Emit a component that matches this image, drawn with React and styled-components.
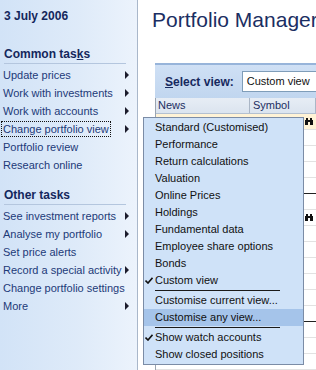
import React from "react";
import styled, { createGlobalStyle } from "styled-components";

const GlobalStyle = createGlobalStyle`
  html, body {
    margin: 0;
    padding: 0;
    background: #fff;
    overflow: hidden;
  }
  body {
    font-family: "Liberation Sans", Arial, sans-serif;
    font-size: 11px;
  }
`;

const Page = styled.div`
  position: relative;
  display: flex;
  width: 316px;
  height: 370px;
  overflow: hidden;
`;

/* ---------- sidebar ---------- */

const Sidebar = styled.div`
  width: 138px;
  flex-shrink: 0;
  box-sizing: border-box;
  padding-top: 7px;
  border-right: 1px solid #a9b7ca;
  background: linear-gradient(to right, #d2e3f7 0%, #dfebf9 60%, #ecf3fc 100%);
`;

const DateLine = styled.div`
  height: 18px;
  line-height: 18px;
  padding-left: 4px;
  font-size: 12px;
  font-weight: 700;
  color: #14275c;
`;

const Section = styled.div`
  margin-top: ${(p) => p.$gap}px;
`;

const Heading = styled.div`
  height: 17px;
  line-height: 17px;
  margin: 0 11px 2px 4px;
  border-bottom: 1px solid #b4c6de;
  font-size: 12px;
  font-weight: 700;
  color: #14275c;

  u {
    text-decoration: underline;
  }
`;

const TaskRow = styled.div`
  display: flex;
  align-items: center;
  justify-content: space-between;
  height: 18px;
  padding: 0 8px 0 3px;
  color: #1d3a78;
  white-space: nowrap;
`;

const FocusLabel = styled.span`
  display: inline-block;
  line-height: 14px;
  margin-left: -2px;
  padding: 0 1px;
  border: 1px dotted #111;
`;

const Arrow = styled.span`
  width: 0;
  height: 0;
  border-left: 4px solid #1c1c2c;
  border-top: 4px solid transparent;
  border-bottom: 4px solid transparent;
`;

/* ---------- main ---------- */

const Main = styled.div`
  flex: 1;
  display: flex;
  flex-direction: column;
  min-width: 0;
`;

const Title = styled.div`
  height: 26px;
  line-height: 26px;
  padding: 7px 0 0 14px;
  font-size: 21px;
  color: #1b2e62;
  white-space: nowrap;
`;

const Band = styled.div`
  display: flex;
  align-items: center;
  height: 38px;
  margin: 30px 0 0 17px;
  padding-left: 10px;
  border-top: 2px solid #97b4da;
  background: linear-gradient(to bottom, #cfe0f5, #c1d6ef);
  white-space: nowrap;
`;

const BandLabel = styled.span`
  font-size: 12px;
  font-weight: 700;
  color: #17295e;

  u {
    text-decoration: underline;
  }
`;

const SelectBox = styled.div`
  flex-shrink: 0;
  width: 120px;
  height: 19px;
  line-height: 19px;
  margin-left: 8px;
  padding-left: 4px;
  background: #fff;
  border: 1px solid #7f9db9;
  color: #111;
`;

const Table = styled.div`
  flex: 1;
  margin-left: 17px;
  border-left: 1px solid #9aa4b0;
`;

const HeaderRow = styled.div`
  display: flex;
  height: 15px;
  line-height: 15px;
  background: linear-gradient(to bottom, #e7edf5, #dbe4ef);
  border-bottom: 1px solid #b3c0d0;
  color: #1b2e62;
  white-space: nowrap;
`;

const HeadCell = styled.div`
  flex-shrink: 0;
  width: ${(p) => p.$w}px;
  padding-left: ${(p) => p.$pad}px;
  box-sizing: border-box;
  border-right: 1px solid #aab6c6;
`;

const BodyRow = styled.div`
  display: flex;
  justify-content: flex-end;
  align-items: center;
  height: 15px;
  padding-right: 2px;
  border-bottom: 1px solid ${(p) => (p.$strong ? "#222" : "#e2e2e2")};
  background: ${(p) => (p.$hot ? "#fff3d6" : "#fff")};
`;

/* ---------- dropdown menu ---------- */

const Menu = styled.div`
  position: absolute;
  left: 143px;
  top: 117px;
  width: 159px;
  padding: 1px 0;
  background: #cfe2f8;
  border: 1px solid #7b8ca6;
  color: #111;
`;

const MenuItem = styled.div`
  position: relative;
  height: 17px;
  line-height: 17px;
  padding-left: 11px;
  white-space: nowrap;
  background: ${(p) => (p.$active ? "#a5c4ea" : "transparent")};
`;

const Check = styled.svg`
  position: absolute;
  left: 1px;
  top: 5px;
`;

const MenuSep = styled.div`
  height: 3px;
  display: flex;
  align-items: center;
  padding-left: 11px;

  &::after {
    content: "";
    width: 125px;
    height: 1px;
    background: #1a1a1a;
  }
`;

const Binoculars = () => (
  <svg width="9" height="7" viewBox="0 0 9 7">
    <rect x="0" y="2" width="3" height="5" fill="#111" />
    <rect x="5" y="2" width="3" height="5" fill="#111" />
    <rect x="1" y="0" width="2" height="2" fill="#111" />
    <rect x="5" y="0" width="2" height="2" fill="#111" />
    <rect x="3" y="2" width="2" height="2" fill="#111" />
  </svg>
);

const CheckMark = () => (
  <Check width="8" height="7" viewBox="0 0 8 7">
    <path d="M0.5 3.5 L3 6 L7.5 0.8" stroke="#111" strokeWidth="1.6" fill="none" />
  </Check>
);

const commonTasks = [
  { label: "Update prices", more: true },
  { label: "Work with investments", more: true },
  { label: "Work with accounts", more: true },
  { label: "Change portfolio view", more: true, focus: true },
  { label: "Portfolio review" },
  { label: "Research online" },
];

const otherTasks = [
  { label: "See investment reports", more: true },
  { label: "Analyse my portfolio", more: true },
  { label: "Set price alerts" },
  { label: "Record a special activity", more: true },
  { label: "Change portfolio settings" },
  { label: "More", more: true },
];

const views = [
  "Standard (Customised)",
  "Performance",
  "Return calculations",
  "Valuation",
  "Online Prices",
  "Holdings",
  "Fundamental data",
  "Employee share options",
  "Bonds",
];

const TaskList = ({ items }) =>
  items.map((t) => (
    <TaskRow key={t.label}>
      {t.focus ? <FocusLabel>{t.label}</FocusLabel> : <span>{t.label}</span>}
      {t.more && <Arrow />}
    </TaskRow>
  ));

export default function App() {
  const rows = Array.from({ length: 16 }, (_, i) => i);

  return (
    <Page>
      <GlobalStyle />
      <Sidebar>
        <DateLine>3 July 2006</DateLine>
        <Section $gap={21}>
          <Heading>
            Common tas<u>k</u>s
          </Heading>
          <TaskList items={commonTasks} />
        </Section>
        <Section $gap={13}>
          <Heading>Other tasks</Heading>
          <TaskList items={otherTasks} />
        </Section>
      </Sidebar>

      <Main>
        <Title>Portfolio Manager</Title>
        <Band>
          <BandLabel>
            <u>S</u>elect view:
          </BandLabel>
          <SelectBox>Custom view</SelectBox>
        </Band>
        <Table>
          <HeaderRow>
            <HeadCell $w={94} $pad={2}>News</HeadCell>
            <HeadCell $w={66} $pad={3}>Symbol</HeadCell>
          </HeaderRow>
          {rows.map((i) => (
            <BodyRow key={i} $hot={i === 0} $strong={i === 4 || i === 12}>
              {(i === 0 || i === 6) && <Binoculars />}
            </BodyRow>
          ))}
        </Table>
      </Main>

      <Menu>
        {views.map((v) => (
          <MenuItem key={v}>{v}</MenuItem>
        ))}
        <MenuItem>
          <CheckMark />
          Custom view
        </MenuItem>
        <MenuSep />
        <MenuItem>Customise current view...</MenuItem>
        <MenuItem $active>Customise any view...</MenuItem>
        <MenuSep />
        <MenuItem>
          <CheckMark />
          Show watch accounts
        </MenuItem>
        <MenuItem>Show closed positions</MenuItem>
      </Menu>
    </Page>
  );
}
